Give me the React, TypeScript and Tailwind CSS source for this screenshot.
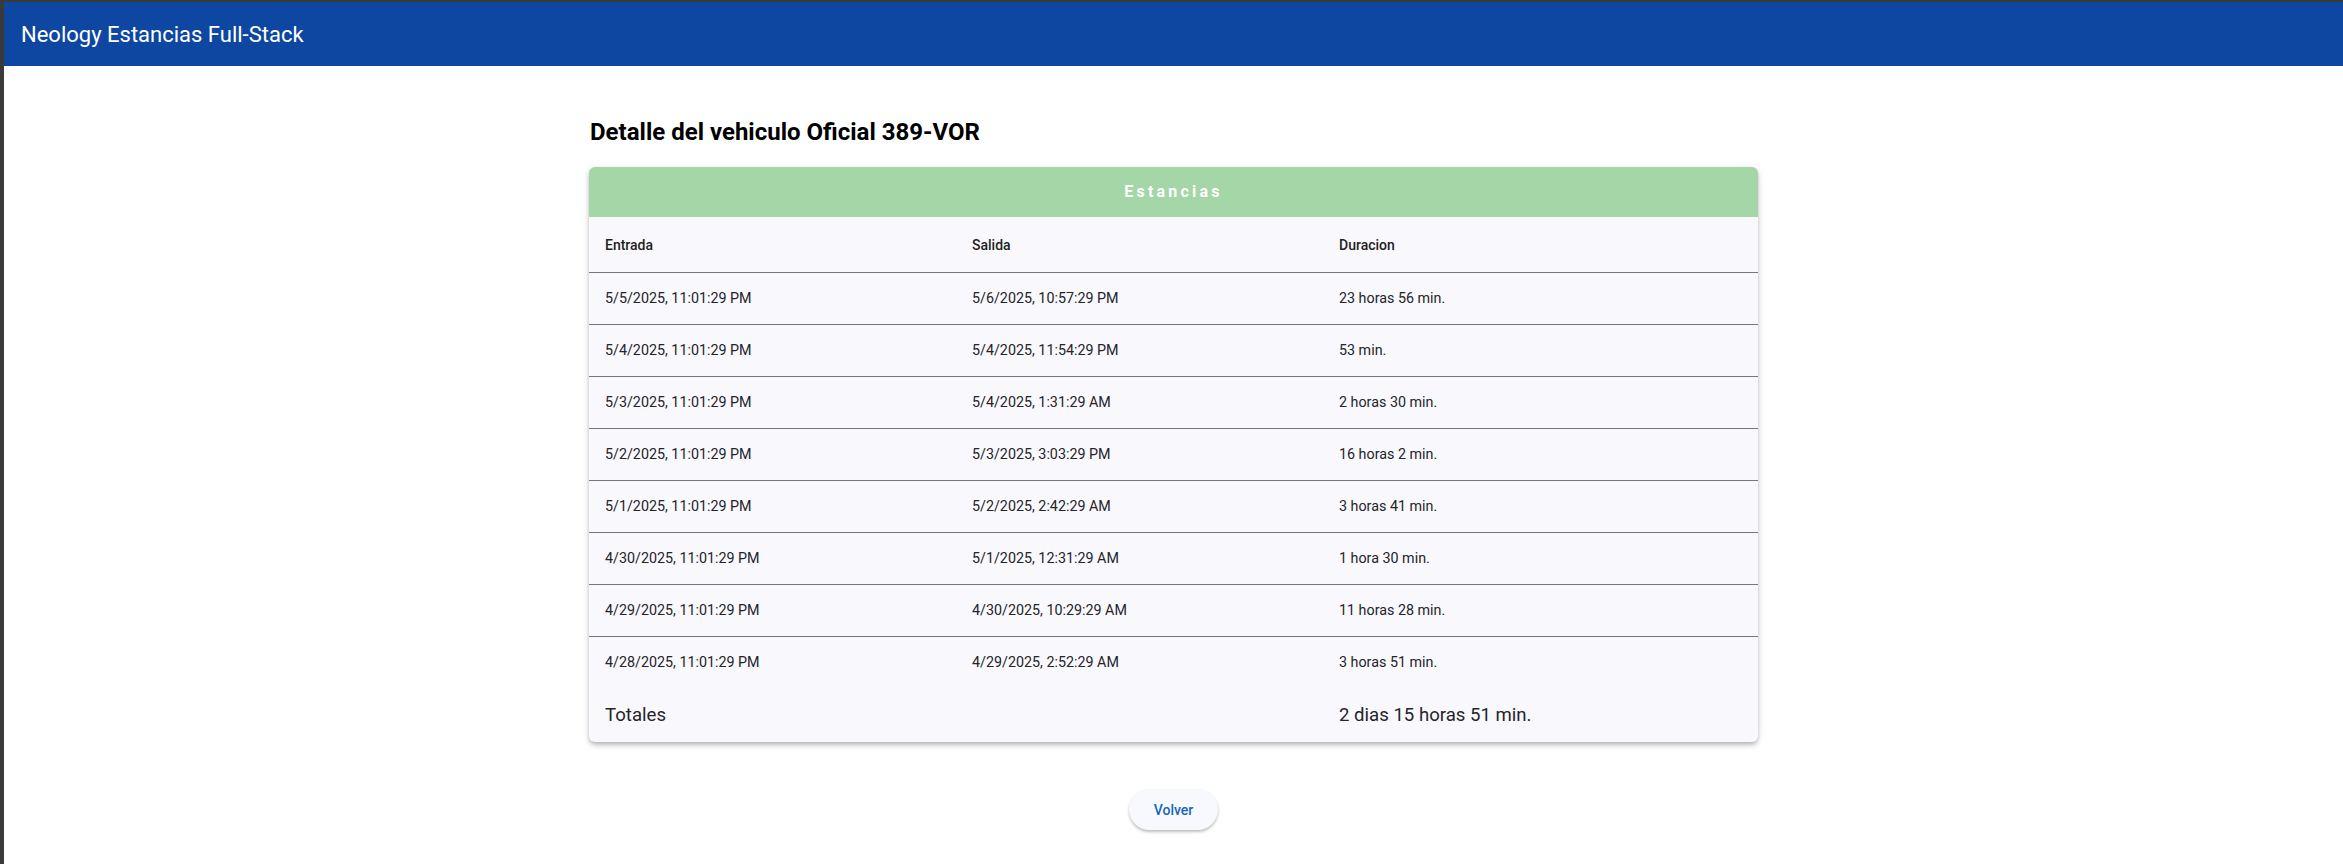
const rows = [
  ["5/5/2025, 11:01:29 PM", "5/6/2025, 10:57:29 PM", "23 horas 56 min."],
  ["5/4/2025, 11:01:29 PM", "5/4/2025, 11:54:29 PM", "53 min."],
  ["5/3/2025, 11:01:29 PM", "5/4/2025, 1:31:29 AM", "2 horas 30 min."],
  ["5/2/2025, 11:01:29 PM", "5/3/2025, 3:03:29 PM", "16 horas 2 min."],
  ["5/1/2025, 11:01:29 PM", "5/2/2025, 2:42:29 AM", "3 horas 41 min."],
  ["4/30/2025, 11:01:29 PM", "5/1/2025, 12:31:29 AM", "1 hora 30 min."],
  ["4/29/2025, 11:01:29 PM", "4/30/2025, 10:29:29 AM", "11 horas 28 min."],
  ["4/28/2025, 11:01:29 PM", "4/29/2025, 2:52:29 AM", "3 horas 51 min."],
];

export default function App() {
  return (
    <div className="min-h-screen border-l-4 border-t-2 border-[#3a3a3a] bg-white font-['Roboto',sans-serif]">
      <header className="flex h-16 items-center bg-[#0d47a1] px-[17px] text-[22px] text-white">
        Neology Estancias Full-Stack
      </header>

      <main className="mx-auto w-[1169px] pt-[50px]">
        <h1 className="pl-px text-2xl leading-8 font-bold text-black">
          Detalle del vehiculo Oficial 389-VOR
        </h1>

        <div className="mt-[19px] overflow-hidden rounded-md bg-[#f9f9fd] shadow-[0_2px_4px_-1px_rgba(0,0,0,0.2),0_4px_5px_0_rgba(0,0,0,0.12),0_1px_10px_0_rgba(0,0,0,0.08)]">
          <div className="flex h-[50px] items-center justify-center bg-[#a5d6a7] text-base font-bold tracking-[0.2em] text-white">
            Estancias
          </div>

          <div className="grid h-[56px] grid-cols-[367px_367px_1fr] items-center border-b border-[#75757d] text-sm font-medium text-[#1e1e24]">
            <div className="px-4">Entrada</div>
            <div className="px-4">Salida</div>
            <div className="px-4">Duracion</div>
          </div>

          {rows.map((row, i) => (
            <div
              key={row[0]}
              className={
                i < rows.length - 1
                  ? "grid h-[52px] grid-cols-[367px_367px_1fr] items-center border-b border-[#75757d] text-[14.3px] text-[#24242a]"
                  : "grid h-[52px] grid-cols-[367px_367px_1fr] items-center text-[14.3px] text-[#24242a]"
              }
            >
              <div className="px-4">{row[0]}</div>
              <div className="px-4">{row[1]}</div>
              <div className="px-4">{row[2]}</div>
            </div>
          ))}

          <div className="grid h-[53px] grid-cols-[367px_367px_1fr] items-center text-[18.6px] text-[#24242a]">
            <div className="px-4">Totales</div>
            <div className="px-4"></div>
            <div className="px-4">2 dias 15 horas 51 min.</div>
          </div>
        </div>

        <div className="flex justify-center pt-[47px] pb-8">
          <button
            type="button"
            className="h-[41px] w-[89px] rounded-full bg-[#f8f9fe] text-sm font-medium text-[#1565c0] shadow-[0_2px_3px_rgba(0,0,0,0.25)]"
          >
            Volver
          </button>
        </div>
      </main>
    </div>
  );
}
